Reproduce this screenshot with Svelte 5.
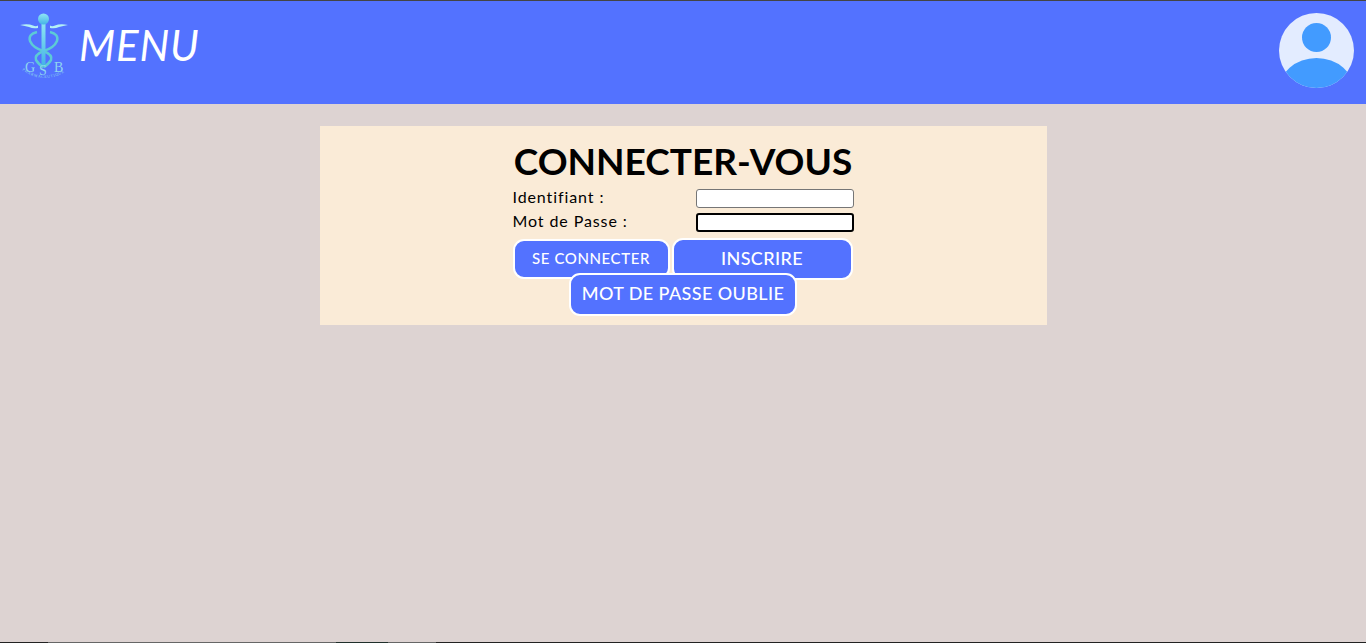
<script>
  let login = $state("");
  let password = $state("");
</script>

<div class="page">
  <header class="top">
    <div class="brand">
      <svg class="logo" viewBox="0 0 75 75" aria-label="GSB">
        <defs>
          <linearGradient id="staff" x1="0" y1="0" x2="0" y2="1">
            <stop offset="0" stop-color="#8fe6f4" />
            <stop offset="1" stop-color="#45b4e6" />
          </linearGradient>
          <path id="arc" d="M22 60 Q44 76 68 60" />
        </defs>
        <path class="wing" d="M20 15 Q28 13.5 33 15.5 Q36 17 38 15.5 L38 18 Q33 19 29 17 Q25 16 20 15Z" />
        <path class="wing" d="M68 15 Q60 13.5 55 15.5 Q52 17 50 15.5 L50 18 Q55 19 59 17 Q63 16 68 15Z" />
        <path class="snake" d="M37 22 Q28 24 30 31 Q33 38 43.500 41 Q53 45 51 50 Q48 55 43.500 57" />
        <path class="snake" d="M50 22 Q59 24 57 31 Q54 38 43.500 41 Q34 45 36 50 Q39 55 43.500 57" />
        <rect x="41.5" y="12" width="4" height="43" fill="url(#staff)" />
        <circle cx="43.500" cy="9" r="5.5" fill="url(#staff)" />
        <text class="letters" x="25" y="62">G</text>
        <text class="letters" x="39" y="65">S</text>
        <text class="letters" x="54" y="62">B</text>
        <text class="tiny"><textPath href="#arc">PHARMACEUTIQUE</textPath></text>
      </svg>
      <h2 class="menu">MENU</h2>
    </div>
    <svg class="avatar" viewBox="0 0 75 75" aria-label="Profil">
      <defs>
        <clipPath id="disc"><circle cx="37.5" cy="37.5" r="37.5" /></clipPath>
      </defs>
      <circle cx="37.5" cy="37.5" r="37.5" fill="#e3ecff" />
      <circle cx="37.5" cy="24.5" r="14.5" fill="#429bff" />
      <ellipse cx="37.5" cy="78" rx="38" ry="33" fill="#429bff" clip-path="url(#disc)" />
    </svg>
  </header>

  <main class="content">
    <section class="card">
      <form class="login" onsubmit={(e) => e.preventDefault()}>
        <h1>CONNECTER-VOUS</h1>
        <div class="row">
          <label for="login">Identifiant :</label>
          <input id="login" type="text" bind:value={login} />
        </div>
        <div class="row">
          <label for="password">Mot de Passe :</label>
          <input id="password" class="focused" type="password" bind:value={password} />
        </div>
        <div class="actions">
          <button class="small" type="submit">SE CONNECTER</button>
          <button class="big" type="button">INSCRIRE</button>
        </div>
        <button class="forgot" type="button">MOT DE PASSE OUBLIE</button>
      </form>
    </section>
  </main>
</div>

<style>
  :global(body) {
    margin: 0;
    background: #ddd3d2;
  }

  .page {
    height: 643px;
    display: flex;
    flex-direction: column;
    overflow: hidden;
    font-family: Lato, "Liberation Sans", sans-serif;
    border-top: 1px solid #444;
    box-sizing: border-box;
    background-color: #ddd3d2;
    background-image: linear-gradient(to right, #222 0 48px, #666 48px 336px, #1f2f2b 336px 388px, #666 388px 436px, #222 436px);
    background-size: 100% 1px;
    background-position: bottom;
    background-repeat: no-repeat;
  }

  .top {
    height: 103px;
    flex: none;
    background: #5372ff;
    display: flex;
    justify-content: space-between;
    padding: 0 12px 0 0;
  }

  .brand {
    display: flex;
    align-items: flex-start;
  }

  .logo {
    width: 75px;
    height: 75px;
    margin-top: 9px;
  }

  .wing {
    fill: #b4f0f5;
  }

  .snake {
    fill: none;
    stroke: #5ccbd6;
    stroke-width: 2.5;
  }

  .letters {
    font-family: "Liberation Serif", serif;
    font-size: 14px;
    fill: #8fd6f0;
  }

  .tiny {
    font-family: "Liberation Serif", serif;
    font-size: 4px;
    letter-spacing: 0.6px;
    fill: #8fd6f0;
  }

  .menu {
    margin: 20px 0 0 4px;
    font-size: 42px;
    line-height: 48px;
    font-weight: 400;
    font-style: italic;
    letter-spacing: 0.8px;
    color: #fff;
  }

  .avatar {
    width: 75px;
    height: 75px;
    margin-top: 12px;
  }

  .content {
    flex: 1;
    padding-top: 22px;
  }

  .card {
    width: 727px;
    height: 199px;
    margin: 0 auto;
    background: #faebd7;
    display: flex;
    justify-content: center;
  }

  .login {
    width: 341px;
    display: flex;
    flex-direction: column;
    align-items: center;
  }

  h1 {
    margin: 15px 0 5px;
    font-size: 37px;
    line-height: 40px;
    font-weight: 700;
    color: #000;
    white-space: nowrap;
  }

  .row {
    width: 100%;
    height: 24px;
    display: flex;
    justify-content: space-between;
    align-items: center;
  }

  label {
    font-size: 16px;
    letter-spacing: 0.9px;
    padding-bottom: 3px;
    color: #000;
  }

  input {
    width: 158px;
    height: 19px;
    box-sizing: border-box;
    padding: 1px 2px;
    border: 1px solid #767676;
    border-radius: 3px;
    background: #fff;
  }

  .focused {
    border: 2px solid #000;
  }

  .actions {
    width: 100%;
    display: flex;
    align-items: center;
    gap: 2px;
    margin-top: 4px;
  }

  button {
    box-sizing: border-box;
    background: #5372ff;
    color: #fff;
    border: 2px solid #fff;
    border-radius: 11px;
    padding-bottom: 4px;
    font-family: inherit;
  }

  .small {
    width: 157px;
    height: 40px;
    font-size: 15px;
    letter-spacing: 0.6px;
    font-weight: 500;
  }

  .big {
    width: 181px;
    height: 42px;
    font-size: 18px;
    letter-spacing: 0.4px;
    font-weight: 500;
  }

  .forgot {
    position: relative;
    width: 228px;
    height: 43px;
    margin-top: -7px;
    font-size: 18px;
    letter-spacing: 0.4px;
    font-weight: 500;
  }
</style>
